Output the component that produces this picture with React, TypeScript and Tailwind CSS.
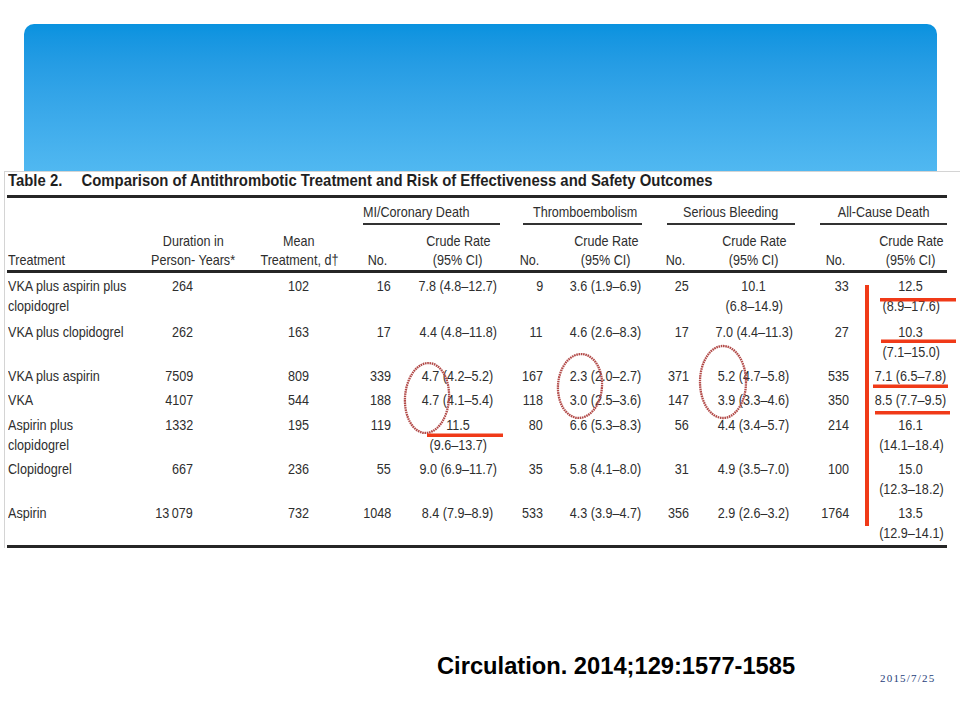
import type { ReactNode } from "react";

type Group = [string, string[]];

type Row = {
  h: string;
  name: string[];
  dur: string;
  mean: string;
  groups: Group[];
};

const COLS =
  "grid grid-cols-[133px_106px_106px_52px_108px_44px_100px_46px_104px_56px_98px]";

const rows: Row[] = [
  {
    h: "h-[46px]",
    name: ["VKA plus aspirin plus", "clopidogrel"],
    dur: "264",
    mean: "102",
    groups: [
      ["16", ["7.8 (4.8–12.7)"]],
      ["9", ["3.6 (1.9–6.9)"]],
      ["25", ["10.1", "(6.8–14.9)"]],
      ["33", ["12.5", "(8.9–17.6)"]],
    ],
  },
  {
    h: "h-[44px]",
    name: ["VKA plus clopidogrel"],
    dur: "262",
    mean: "163",
    groups: [
      ["17", ["4.4 (4.8–11.8)"]],
      ["11", ["4.6 (2.6–8.3)"]],
      ["17", ["7.0 (4.4–11.3)"]],
      ["27", ["10.3", "(7.1–15.0)"]],
    ],
  },
  {
    h: "h-[24px]",
    name: ["VKA plus aspirin"],
    dur: "7509",
    mean: "809",
    groups: [
      ["339", ["4.7 (4.2–5.2)"]],
      ["167", ["2.3 (2.0–2.7)"]],
      ["371", ["5.2 (4.7–5.8)"]],
      ["535", ["7.1 (6.5–7.8)"]],
    ],
  },
  {
    h: "h-[25px]",
    name: ["VKA"],
    dur: "4107",
    mean: "544",
    groups: [
      ["188", ["4.7 (4.1–5.4)"]],
      ["118", ["3.0 (2.5–3.6)"]],
      ["147", ["3.9 (3.3–4.6)"]],
      ["350", ["8.5 (7.7–9.5)"]],
    ],
  },
  {
    h: "h-[44px]",
    name: ["Aspirin plus", "clopidogrel"],
    dur: "1332",
    mean: "195",
    groups: [
      ["119", ["11.5", "(9.6–13.7)"]],
      ["80", ["6.6 (5.3–8.3)"]],
      ["56", ["4.4 (3.4–5.7)"]],
      ["214", ["16.1", "(14.1–18.4)"]],
    ],
  },
  {
    h: "h-[44px]",
    name: ["Clopidogrel"],
    dur: "667",
    mean: "236",
    groups: [
      ["55", ["9.0 (6.9–11.7)"]],
      ["35", ["5.8 (4.1–8.0)"]],
      ["31", ["4.9 (3.5–7.0)"]],
      ["100", ["15.0", "(12.3–18.2)"]],
    ],
  },
  {
    h: "h-[42px]",
    name: ["Aspirin"],
    dur: "13\u2009079",
    mean: "732",
    groups: [
      ["1048", ["8.4 (7.9–8.9)"]],
      ["533", ["4.3 (3.9–4.7)"]],
      ["356", ["2.9 (2.6–3.2)"]],
      ["1764", ["13.5", "(12.9–14.1)"]],
    ],
  },
];

const ORIGIN = {
  left: "origin-left",
  right: "origin-right",
  center: "origin-center",
};

// the journal table uses a condensed face; squeeze Arial metrics to match
function Sq({ children, o = "left" }: { children: ReactNode; o?: keyof typeof ORIGIN }) {
  return (
    <span className={`inline-block whitespace-nowrap scale-x-[0.84] ${ORIGIN[o]}`}>
      {children}
    </span>
  );
}

function Lines({ lines, o = "center" }: { lines: string[]; o?: keyof typeof ORIGIN }) {
  return (
    <>
      {lines.map((l) => (
        <div key={l} className="whitespace-nowrap">
          <Sq o={o}>{l}</Sq>
        </div>
      ))}
    </>
  );
}

function Annotations() {
  const red = "#f03a18";
  const circ = "#b24a48";
  return (
    <svg
      className="absolute left-0 top-0 pointer-events-none"
      width="960"
      height="720"
      viewBox="0 0 960 720"
    >
      {/* hand-drawn circles */}
      <g fill="none" stroke={circ} strokeWidth="2.3" strokeDasharray="1.6 0.7">
        <ellipse cx="427" cy="398" rx="22" ry="35" transform="rotate(4 427 398)" />
        <ellipse cx="580" cy="386" rx="22" ry="32" transform="rotate(4 580 386)" />
        <ellipse cx="723" cy="382" rx="23" ry="36" />
      </g>

      {/* underlines */}
      <rect x="880" y="298" width="76" height="3.5" fill={red} />
      <rect x="881" y="339.5" width="75" height="3.5" fill={red} />
      <rect x="873" y="384.5" width="75" height="3.5" fill={red} />
      <rect x="875" y="411" width="75" height="3.5" fill={red} />
      <rect x="427" y="433.5" width="76" height="3.5" fill={red} />

      {/* vertical bar */}
      <rect x="865" y="285" width="4" height="241" fill={red} />
    </svg>
  );
}

export default function App() {
  return (
    <div className="relative w-[960px] h-[720px] bg-white overflow-hidden pt-[24px]">
      {/* Title banner */}
      <div className="ml-[24px] w-[913px] h-[147px] rounded-t-[10px] bg-gradient-to-b from-[#0892df] to-[#50b8f1]" />

      {/* Table snapshot */}
      <div
        className="ml-[4px] h-[377px] border-l border-t border-[#d4d4d4] pl-[2px] text-[#2e2e2e]"
        style={{ fontFamily: '"Liberation Sans", Arial, sans-serif' }}
      >
        <div className="h-[17px] leading-[17px] pl-[1px] text-[17px] font-bold text-[#1f1f1f] whitespace-nowrap">
          <span className="inline-block scale-x-[0.875] origin-left">
            Table 2.
            <span className="ml-[22px]">
              Comparison of Antithrombotic Treatment and Risk of Effectiveness and Safety Outcomes
            </span>
          </span>
        </div>

        <div className="mt-[6px] w-[940px] h-[3px] bg-[#262626]" />

        <div className="text-[15px]">
          {/* group headers */}
          <div className={`${COLS} pt-[4px]`}>
            <div className="col-span-3" />
            <div className="col-span-2 ml-[11px] mr-[12px]">
              <div className="leading-[20px] whitespace-nowrap">
                <Sq>MI/Coronary Death</Sq>
              </div>
              <div className="mt-[1px] h-[2px] bg-[#333]" />
            </div>
            <div className="col-span-2 ml-[11px] mr-[14px]">
              <div className="leading-[20px] text-center whitespace-nowrap">
                <Sq o="center">Thromboembolism</Sq>
              </div>
              <div className="mt-[1px] h-[2px] bg-[#333]" />
            </div>
            <div className="col-span-2 ml-[11px] mr-[11px]">
              <div className="leading-[20px] text-center whitespace-nowrap">
                <Sq o="center">Serious Bleeding</Sq>
              </div>
              <div className="mt-[1px] h-[2px] bg-[#333]" />
            </div>
            <div className="col-span-2 ml-[14px] mr-[13px]">
              <div className="leading-[20px] text-center whitespace-nowrap">
                <Sq o="center">All-Cause Death</Sq>
              </div>
              <div className="mt-[1px] h-[2px] bg-[#333]" />
            </div>
          </div>

          {/* column headers */}
          <div className={`${COLS} pt-[6px] leading-[19px] h-[44px]`}>
            <div className="pl-[1px] flex items-end">
              <Sq>Treatment</Sq>
            </div>
            <div className="text-center">
              <Lines lines={["Duration in", "Person- Years*"]} />
            </div>
            <div className="text-center">
              <Lines lines={["Mean", "Treatment, d†"]} />
            </div>
            {[0, 1, 2, 3].map((i) => (
              <div key={i} className="contents">
                <div className="flex items-end justify-end pr-[17px]">
                  <Sq o="right">No.</Sq>
                </div>
                <div className="text-center">
                  <Lines lines={["Crude Rate", "(95% CI)"]} />
                </div>
              </div>
            ))}
          </div>

          <div className="mt-[1px] w-[940px] h-[3px] bg-[#262626]" />

          {/* body */}
          <div className="mt-[3px] leading-[20px]">
            {rows.map((r) => (
              <div key={r.name.join(" ")} className={`${COLS} ${r.h}`}>
                <div className="pl-[1px]">
                  <Lines lines={r.name} o="left" />
                </div>
                <div className="text-right pr-[53px]">
                  <Sq o="right">{r.dur}</Sq>
                </div>
                <div className="text-right pr-[43px]">
                  <Sq o="right">{r.mean}</Sq>
                </div>
                {r.groups.map(([no, rate], i) => (
                  <div key={i} className="contents">
                    <div className="text-right pr-[13px]">
                      <Sq o="right">{no}</Sq>
                    </div>
                    <div className="text-center">
                      <Lines lines={rate} />
                    </div>
                  </div>
                ))}
              </div>
            ))}
          </div>

          <div className="w-[940px] h-[3px] bg-[#262626]" />
        </div>
      </div>

      {/* Footer */}
      <div className="mt-[104px] pl-[437px] flex items-start">
        <div
          className="w-[443px] text-[23.7px] leading-[28px] font-bold text-black whitespace-nowrap"
          style={{ fontFamily: '"Liberation Sans", Arial, sans-serif' }}
        >
          Circulation. 2014;129:1577-1585
        </div>
        <div
          className="mt-[20px] text-[11px] leading-[12px] tracking-[1.2px] text-[#26407a]"
          style={{ fontFamily: '"Liberation Serif", serif' }}
        >
          2015/7/25
        </div>
      </div>

      <Annotations />
    </div>
  );
}
